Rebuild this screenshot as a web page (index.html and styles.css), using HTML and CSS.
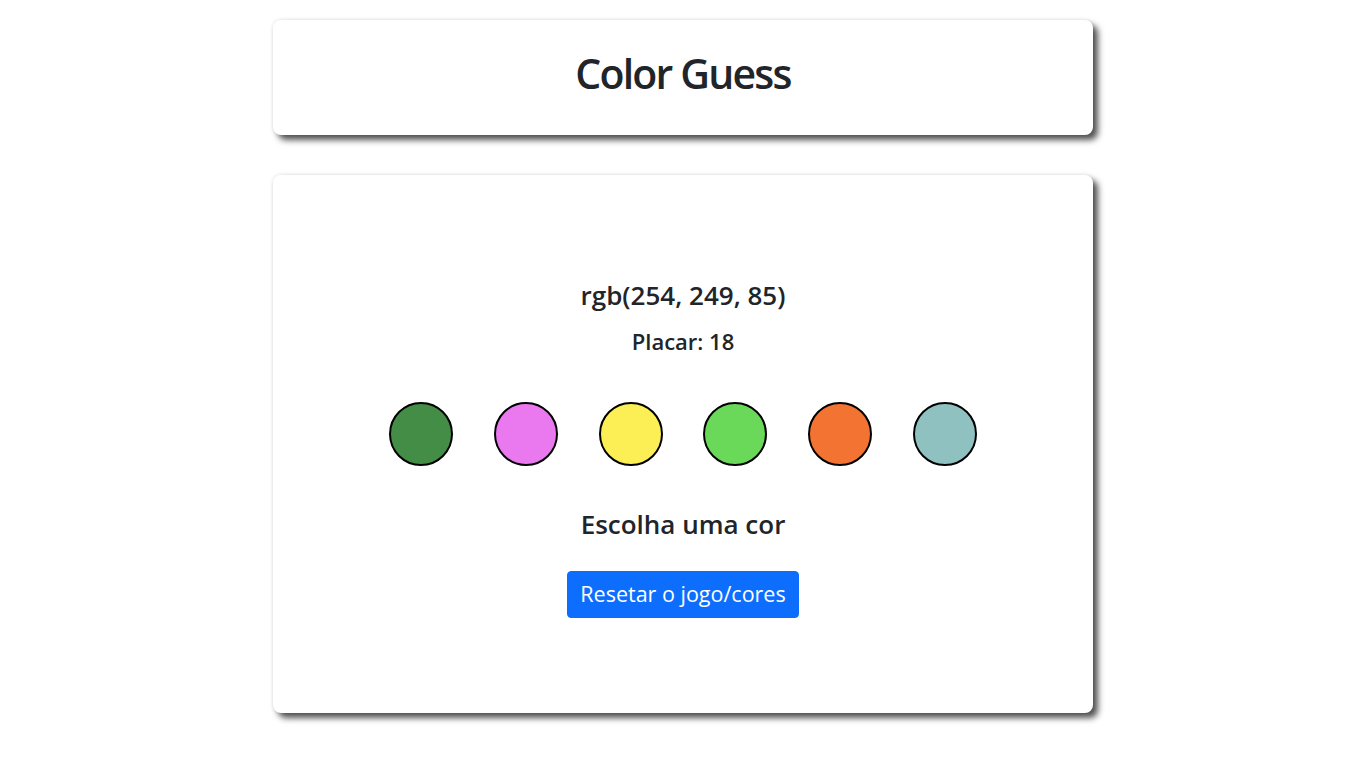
FILE: index.html
```html
<!DOCTYPE html>
<html lang="pt">
<head>
<meta charset="utf-8">
<title>Color Guess</title>
<link rel="stylesheet" href="styles.css">
</head>
<body>
<main class="page">
  <header class="card header-card">
    <h1 class="title">Color Guess</h1>
  </header>
  <section class="card game-card">
    <h2 class="rgb">rgb(254, 249, 85)</h2>
    <h3 class="score">Placar: 18</h3>
    <div class="balls">
      <div class="ball" style="background:#448d46"></div>
      <div class="ball" style="background:#ea78ef"></div>
      <div class="ball" style="background:#fbef55"></div>
      <div class="ball" style="background:#6ad95a"></div>
      <div class="ball" style="background:#f27332"></div>
      <div class="ball" style="background:#8fc1c0"></div>
    </div>
    <h2 class="answer">Escolha uma cor</h2>
    <button class="btn">Resetar o jogo/cores</button>
  </section>
</main>
</body>
</html>
```
FILE: styles.css
```css
* { box-sizing: border-box; }
html, body { margin: 0; padding: 0; background: #fff; }
body {
  font-family: "Open Sans", "Noto Sans", sans-serif;
  color: #212529;
  padding-bottom: 30px;
}
.page {
  width: 820px;
  margin: 20px auto 0;
  display: flex;
  flex-direction: column;
  gap: 40px;
}
.card {
  background: #fff;
  border-radius: 8px;
  box-shadow: 5px 5px 6px rgba(0,0,0,0.68), 0 0 4px rgba(0,0,0,0.12);
  text-align: center;
}
.header-card {
  height: 115px;
  display: flex;
  align-items: center;
  justify-content: center;
  padding-bottom: 9px;
}
.title {
  margin: 0;
  font-size: 41px;
  line-height: 50px;
  font-weight: 600;
  letter-spacing: -1.8px;
}
.game-card {
  height: 538px;
  display: flex;
  flex-direction: column;
  align-items: center;
  padding-top: 102px;
}
.rgb {
  margin: 0;
  font-size: 26px;
  line-height: 36px;
  font-weight: 600;
}
.score {
  margin: 13px 0 0;
  font-size: 22px;
  line-height: 30px;
  font-weight: 600;
}
.balls {
  margin-top: 46px;
  display: flex;
  gap: 40.8px;
}
.ball {
  width: 64px;
  height: 64px;
  border-radius: 50%;
  border: 2px solid #000;
}
.answer {
  margin: 40px 0 0;
  font-size: 26px;
  line-height: 36px;
  font-weight: 600;
}
.btn {
  margin-top: 29px;
  font-family: inherit;
  font-size: 21.5px;
  line-height: 28px;
  padding: 8px 12px 9px;
  height: 47px;
  color: #fff;
  background: #0d6efd;
  border: 1px solid #0d6efd;
  border-radius: 4px;
}
```
